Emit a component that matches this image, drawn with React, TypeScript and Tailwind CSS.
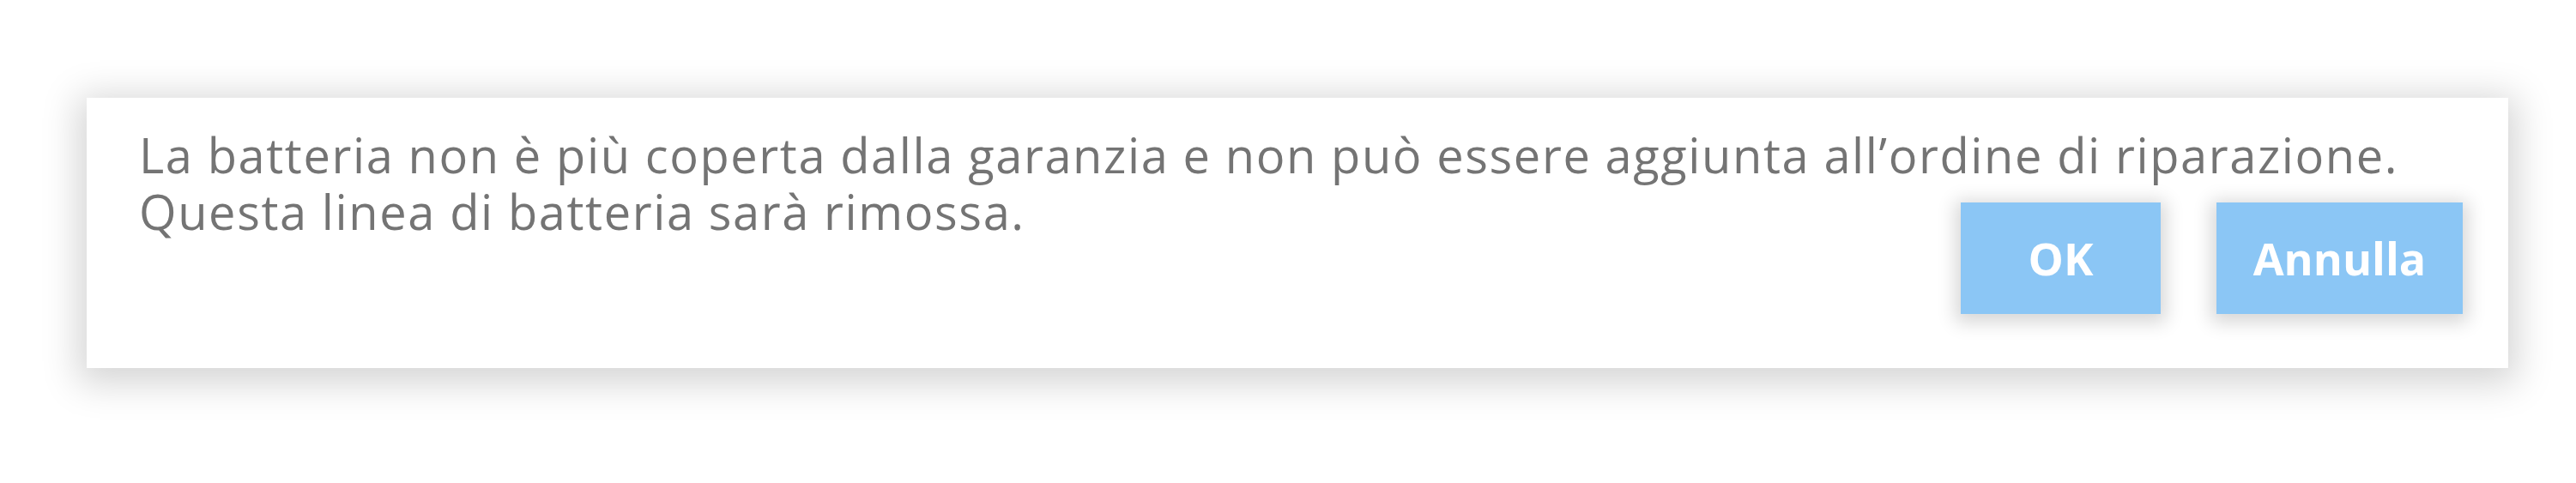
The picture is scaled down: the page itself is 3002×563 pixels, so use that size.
export default function App() {
  return (
    <div className="min-h-[563px] w-full bg-white pt-[114px] pl-[101px] font-['Open_Sans',_sans-serif]">
      <div className="flex w-[2822px] flex-col bg-white pt-[33px] pb-[63px] pl-[61px] pr-[53px] shadow-[0_8px_40px_10px_rgba(0,0,0,0.17)]">
        <p className="text-[56px] leading-[66px] tracking-[1.6px] text-[#747474]">
          La batteria non è più coperta dalla garanzia e non può essere aggiunta all’ordine di riparazione.
          <br />
          Questa linea di batteria sarà rimossa.
        </p>
        <div className="-mt-[43px] flex justify-end gap-[65px]">
          <button className="h-[130px] w-[233px] bg-[#8bc6f5] text-[52px] font-bold text-white shadow-[0_4px_20px_6px_rgba(0,0,0,0.16)]">
            OK
          </button>
          <button className="h-[130px] w-[287px] bg-[#8bc6f5] text-[52px] font-bold text-white shadow-[0_4px_20px_6px_rgba(0,0,0,0.16)]">
            Annulla
          </button>
        </div>
      </div>
    </div>
  );
}
